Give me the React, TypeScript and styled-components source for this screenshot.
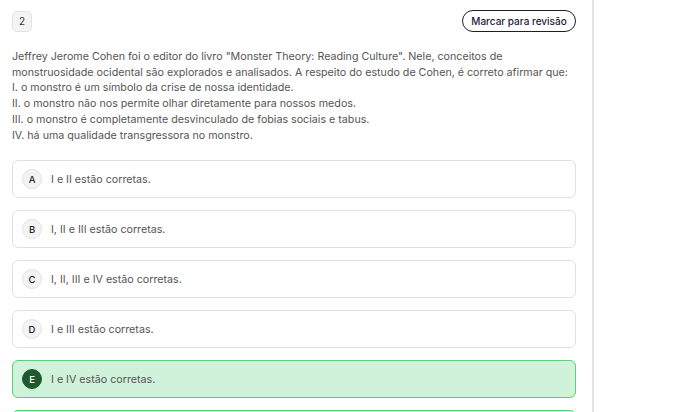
import React from "react";
import styled, { createGlobalStyle } from "styled-components";

const Global = createGlobalStyle`
  html, body { margin: 0; padding: 0; background: #fff; }
  body { font-family: Inter, "Noto Sans", Arial, sans-serif; }
  * { box-sizing: border-box; }
`;

const Page = styled.div`
  display: flex;
  height: 412px;
  overflow: hidden;
`;

const Main = styled.main`
  width: 594px;
  flex: none;
  border-right: 2px solid #e2e2e2;
  padding: 10px 16px 0 12px;
  display: flex;
  flex-direction: column;
`;

const Header = styled.div`
  display: flex;
  justify-content: space-between;
  align-items: center;
`;

const Number = styled.div`
  width: 20px;
  height: 21px;
  border: 1px solid #e2e2e2;
  background: #f4f4f5;
  border-radius: 5px;
  display: flex;
  align-items: center;
  justify-content: center;
  font-size: 10px;
  color: #333;
`;

const ReviewButton = styled.button`
  height: 22px;
  width: 114px;
  border: 1px solid #1e1e24;
  border-radius: 11px;
  background: #fff;
  font-family: inherit;
  font-size: 10px;
  font-weight: 500;
  color: #1c1c3a;
  padding: 0;
`;

const Statement = styled.div`
  margin-top: 17px;
  font-size: 10.7px;
  line-height: 15.7px;
  color: #555;
`;

const Options = styled.div`
  margin-top: 17px;
  display: flex;
  flex-direction: column;
  gap: 12px;
`;

const Option = styled.div<{ $selected?: boolean }>`
  height: 38px;
  flex: none;
  border: 1px solid ${(p) => (p.$selected ? "#5ccf78" : "#e1e1e1")};
  background: ${(p) => (p.$selected ? "#d0f1da" : "#fff")};
  border-radius: 6px;
  display: flex;
  align-items: center;
  padding-left: 9px;
  gap: 9px;
`;

const Letter = styled.span<{ $selected?: boolean }>`
  width: 20px;
  height: 20px;
  border-radius: 50%;
  display: flex;
  align-items: center;
  justify-content: center;
  font-size: 9.5px;
  font-weight: 500;
  background: ${(p) => (p.$selected ? "#1d5a2c" : "#f3f3f4")};
  border: 1px solid ${(p) => (p.$selected ? "#1d5a2c" : "#e3e3e3")};
  color: ${(p) => (p.$selected ? "#fff" : "#222")};
`;

const OptionText = styled.span`
  font-size: 10.7px;
  color: #555;
`;

const options = [
  { l: "A", t: "I e II estão corretas." },
  { l: "B", t: "I, II e III estão corretas." },
  { l: "C", t: "I, II, III e IV estão corretas." },
  { l: "D", t: "I e III estão corretas." },
  { l: "E", t: "I e IV estão corretas.", s: true },
  { l: "F", t: "", s: true },
];

export default function App() {
  return (
    <>
      <Global />
      <Page>
        <Main>
          <Header>
            <Number>2</Number>
            <ReviewButton>Marcar para revisão</ReviewButton>
          </Header>
          <Statement>
            Jeffrey Jerome Cohen foi o editor do livro "Monster Theory: Reading Culture". Nele, conceitos de
            <br />
            monstruosidade ocidental são explorados e analisados. A respeito do estudo de Cohen, é correto afirmar que:
            <br />
            I. o monstro é um símbolo da crise de nossa identidade.
            <br />
            II. o monstro não nos permite olhar diretamente para nossos medos.
            <br />
            III. o monstro é completamente desvinculado de fobias sociais e tabus.
            <br />
            IV. há uma qualidade transgressora no monstro.
          </Statement>
          <Options>
            {options.map((o) => (
              <Option key={o.l} $selected={o.s}>
                {o.t && <Letter $selected={o.s}>{o.l}</Letter>}
                {o.t && <OptionText>{o.t}</OptionText>}
              </Option>
            ))}
          </Options>
        </Main>
      </Page>
    </>
  );
}
